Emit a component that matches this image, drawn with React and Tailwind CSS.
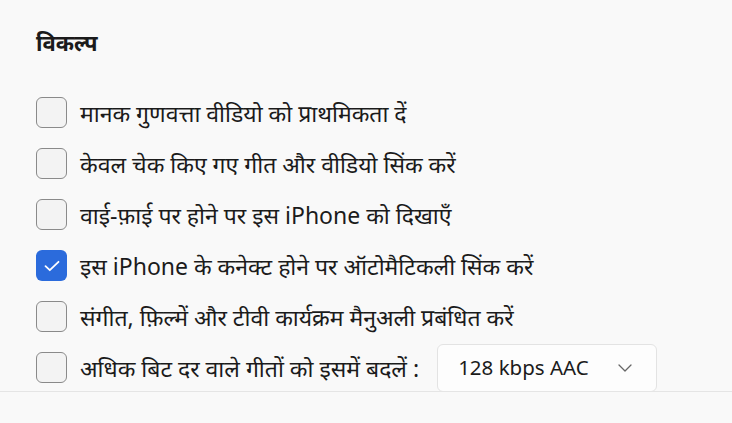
import React from "react";

const font = { fontFamily: '"Noto Sans", "Noto Sans Devanagari", sans-serif' };

function Box({ checked }) {
  if (checked) {
    return (
      <div className="w-[31px] h-[31px] shrink-0 rounded-[6px] bg-[#2b6bdc] flex items-center justify-center">
        <svg width="16" height="12" viewBox="0 0 16 12" fill="none">
          <path d="M1.5 6.2 L5.8 10.2 L14.5 1.8" stroke="white" strokeWidth="1.8" strokeLinecap="round" strokeLinejoin="round" />
        </svg>
      </div>
    );
  }
  return <div className="w-[31px] h-[31px] shrink-0 rounded-[6px] border-[1.5px] border-[#8a8a8a] bg-[#f3f3f3]" />;
}

function Row({ checked, children }) {
  return (
    <div className="h-[51px] flex items-center gap-[13px]">
      <Box checked={checked} />
      {children}
    </div>
  );
}

export default function App() {
  const items = [
    ["मानक गुणवत्ता वीडियो को प्राथमिकता दें", false],
    ["केवल चेक किए गए गीत और वीडियो सिंक करें", false],
    ["वाई-फ़ाई पर होने पर इस iPhone को दिखाएँ", false],
    ["इस iPhone के कनेक्ट होने पर ऑटोमैटिकली सिंक करें", true],
    ["संगीत, फ़िल्में और टीवी कार्यक्रम मैनुअली प्रबंधित करें", false],
  ];
  return (
    <div className="w-[732px] h-[423px] bg-[#f9f9f9] flex flex-col text-[#1b1b1b] overflow-hidden" style={font}>
      <div className="h-[391px] px-[36px] overflow-hidden">
        <div className="mt-[28px] h-[28px] leading-[28px] text-[22px] font-bold">विकल्प</div>
        <div className="mt-[31px] flex flex-col">
          {items.map(([t, c]) => (
            <Row key={t} checked={c}>
              <span className="text-[23px] leading-[30px] whitespace-nowrap">{t}</span>
            </Row>
          ))}
          <Row checked={false}>
            <span className="text-[23px] leading-[30px] whitespace-nowrap">अधिक बिट दर वाले गीतों को इसमें बदलें :</span>
            <div className="ml-[5px] w-[220px] h-[48px] shrink-0 rounded-[6px] border border-[#e3e3e3] bg-[#fdfdfd] flex items-center justify-between pl-[20px] pr-[24px]">
              <span className="text-[20.5px]">128 kbps AAC</span>
              <svg width="14" height="8" viewBox="0 0 14 8" fill="none">
                <path d="M1 1 L7 7 L13 1" stroke="#666" strokeWidth="1.3" strokeLinecap="round" strokeLinejoin="round" />
              </svg>
            </div>
          </Row>
        </div>
      </div>
      <div className="flex-1 border-t border-[#e5e5e5] bg-[#f9f9f9]" />
    </div>
  );
}
